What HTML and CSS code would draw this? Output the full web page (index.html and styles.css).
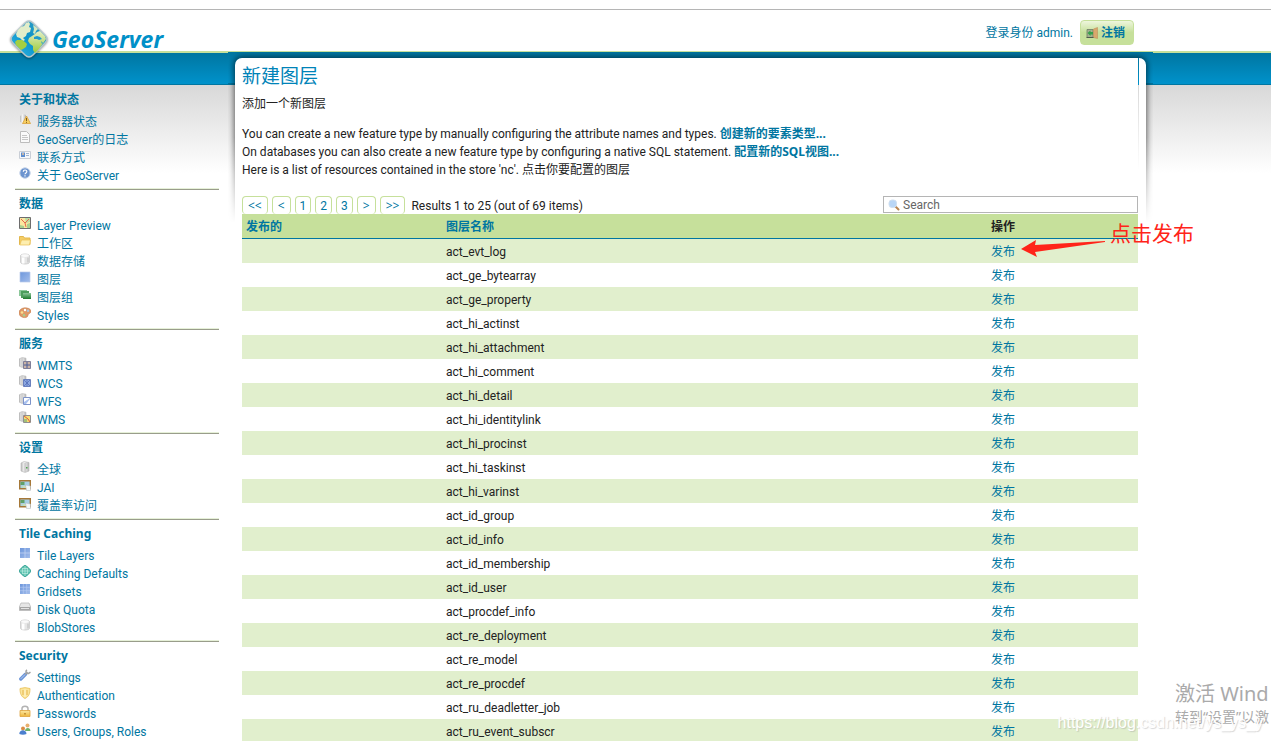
FILE: index.html
```html
<!DOCTYPE html>
<html lang="zh-CN">
<head>
<meta charset="utf-8">
<title>GeoServer: 新建图层</title>
<link rel="stylesheet" href="styles.css">
</head>
<body>
<svg class="sprite" aria-hidden="true">
  <defs>
    <linearGradient id="g-grey" x1="0" x2="1" y1="0" y2="0"><stop offset="0" stop-color="#b9b9b9"/><stop offset=".4" stop-color="#f6f6f6"/><stop offset="1" stop-color="#b5b5b5"/></linearGradient>
    <linearGradient id="g-blue" x1="0" x2="1" y1="0" y2="1"><stop offset="0" stop-color="#6d97dc"/><stop offset="1" stop-color="#a3bdeb"/></linearGradient>
    <linearGradient id="g-gold" x1="0" x2="0" y1="0" y2="1"><stop offset="0" stop-color="#fbe9a4"/><stop offset="1" stop-color="#eeb63c"/></linearGradient>
    <linearGradient id="g-green" x1="0" x2="0" y1="0" y2="1"><stop offset="0" stop-color="#8cc79a"/><stop offset="1" stop-color="#1d7a2c"/></linearGradient>
    <linearGradient id="g-sea" x1="0" x2="1" y1="1" y2="0"><stop offset="0" stop-color="#35b8e6"/><stop offset=".5" stop-color="#0a93cb"/><stop offset="1" stop-color="#3d9fc0"/></linearGradient>
    <linearGradient id="g-land" x1="0" x2="0" y1="0" y2="1"><stop offset="0" stop-color="#e4efc6"/><stop offset="1" stop-color="#9ccb3b"/></linearGradient>
  </defs>
  <symbol id="i-status" viewBox="0 0 12 12"><path d="M1 3l3-2 3 1v7l-3 1-3-1z" fill="url(#g-grey)"/><path d="M7.500 3l4 7.500h-8z" fill="#f7cf62" stroke="#d99a2b" stroke-width=".7"/><path d="M7.500 5v3M7.500 8.800v1" stroke="#7d5a1b"/></symbol>
  <symbol id="i-doc" viewBox="0 0 12 12"><path d="M1.500.5h6l3 3v8h-9z" fill="#fafafa" stroke="#bdbdbd"/><path d="M3 4.500h5M3 6.500h6M3 8.500h6" stroke="#c6c6c6"/></symbol>
  <symbol id="i-card" viewBox="0 0 12 12"><path d="M.5 2.500h11v7H.5z" fill="#f5f7fb" stroke="#c9ced6"/><path d="M2 3.500h4V8H2z" fill="#5c8dcf"/><circle cx="4" cy="5" r="1" fill="#e9c39c"/><path d="M7 4.500h3M7 6.500h3" stroke="#a2b5d1"/></symbol>
  <symbol id="i-help" viewBox="0 0 12 12"><circle cx="6" cy="6" r="5.200" fill="#6c94cf" stroke="#c3d2e8"/><path d="M4.300 4.700c0-2.200 3.500-2.200 3.500-.2C7.800 6 6 5.800 6 7.300M6 8.300v1.200" fill="none" stroke="#fff" stroke-width="1.200"/></symbol>
  <symbol id="i-map" viewBox="0 0 12 12"><path d="M.5.5h11v11H.5z" fill="#fbe7a0" stroke="#6d6d6d"/><path d="M6 1h5v4L7 6z" fill="#b9dba3"/><path d="M2 2l4 4 1 4M6 6l4-4" fill="none" stroke="#e5674b"/><path d="M1 8l4 1v2H1zM8 7l3-1v5H8z" fill="#a8cf8f"/></symbol>
  <symbol id="i-folder" viewBox="0 0 12 12"><path d="M.5 9.500v-8h4l1 1.500h5.500v6.500z" fill="#f4cd66" stroke="#e2b74d"/><path d="M2.500 5h9l-1 5H.8z" fill="#fdeeb0" stroke="#e9bf55" stroke-width=".7"/></symbol>
  <symbol id="i-db" viewBox="0 0 12 12"><path d="M1.500 2.500c1-2 8-2 9 0v7c-1 2-8 2-9 0z" fill="#e6e6e6" stroke="#c9c9c9" stroke-width=".8"/><ellipse cx="6" cy="2.600" rx="3.800" ry="1.300" fill="#fafafa"/><path d="M3 4.500h2.500v6H3z" fill="#fff"/><path d="M8 4.500h2v5H8z" fill="#d0d0d0"/></symbol>
  <symbol id="i-layer" viewBox="0 0 12 12"><path d="M1 1h10v10H1z" fill="url(#g-blue)" stroke="#b8c9ea" stroke-width=".7"/></symbol>
  <symbol id="i-group" viewBox="0 0 12 12"><path d="M0 1h8v6H0z" fill="#8cc79a"/><path d="M2 2h8v7H2z" fill="#4d9e5c"/><path d="M4 4h8v6H4z" fill="url(#g-green)"/></symbol>
  <symbol id="i-palette" viewBox="0 0 12 12"><path d="M0 6C0-.5 11-.5 12 4c0 3-3 2-3 4 0 3-4 3-6 2S0 8 0 6z" fill="#e09a68" stroke="#c37a4c" stroke-width=".6"/><circle cx="3" cy="5.500" r="1.300" fill="#f7e290"/><circle cx="6" cy="3" r="1.200" fill="#fff"/><circle cx="9" cy="3.800" r="1.200" fill="#a9c6e3"/><circle cx="5" cy="8.300" r="1.200" fill="#a6cf8f"/></symbol>
  <symbol id="i-server" viewBox="0 0 12 12"><path d="M2 2l3-1.500 5 1V10l-4 1.500-4-1.500z" fill="url(#g-grey)" stroke="#b5b5b5" stroke-width=".6"/><path d="M6 2v9" stroke="#a5a5a5" stroke-width=".7"/><path d="M7 6h1.500v1.500H7z" fill="#4fa44f"/></symbol>
  <symbol id="i-srv" viewBox="0 0 12 12"><path d="M0 2l3-1.500 4 .7V9L3 10.500 0 9z" fill="url(#g-grey)" stroke="#b5b5b5" stroke-width=".6"/><path d="M3 1v9" stroke="#a5a5a5" stroke-width=".7"/></symbol>
  <symbol id="i-wmts" viewBox="0 0 12 12"><use href="#i-srv"/><path d="M4.500 4.500h7v7h-7z" fill="#c9b3a6" stroke="#7f7f98"/><path d="M8 5v6M5 8h6" stroke="#4a5e9a"/></symbol>
  <symbol id="i-wcs" viewBox="0 0 12 12"><use href="#i-srv"/><path d="M4.500 4.500h7v7h-7z" fill="#8ea9e0" stroke="#6a80bd"/><path d="M5 5l6 6M11 5l-6 6M8 5v6" stroke="#4f69b5" stroke-width=".7"/></symbol>
  <symbol id="i-wfs" viewBox="0 0 12 12"><use href="#i-srv"/><path d="M4.500 4.500h7v7h-7z" fill="#fff" stroke="#7d93c9"/><path d="M5 11V9l6-4v1L7 11z" fill="#a9c1ee"/></symbol>
  <symbol id="i-wms" viewBox="0 0 12 12"><use href="#i-srv"/><path d="M4.500 4.500h7v7h-7z" fill="#f5dc71" stroke="#8f8f8f"/><path d="M5 5l4 3 2 3" fill="none" stroke="#db5c44"/><path d="M5 8h3v3H5z" fill="#a2c077"/></symbol>
  <symbol id="i-picture" viewBox="0 0 12 12"><path d="M.7 1.700h10.600v8H.7z" fill="#a6cfe6" stroke="#a67838" stroke-width="1.400"/><path d="M1.500 3h4v3h-4z" fill="#5fa068"/><path d="M6.500 6l5 1v4.500h-4z" fill="#f4f7f8" stroke="#aeb7bd" stroke-width=".5"/><path d="M1.500 8l4-1 2 2z" fill="#d5e4a8"/></symbol>
  <symbol id="i-tiles" viewBox="0 0 12 12"><path d="M1 1h10v10H1z" fill="url(#g-blue)"/><path d="M6 1v10M1 6h10" stroke="#c3d3f3" stroke-width=".8"/></symbol>
  <symbol id="i-grid" viewBox="0 0 12 12"><path d="M1 1h10v10H1z" fill="url(#g-blue)"/><path d="M4.300 1v10M7.700 1v10M1 4.300h10M1 7.700h10" stroke="#b9ccf1" stroke-width=".6"/></symbol>
  <symbol id="i-globe" viewBox="0 0 12 12"><path d="M4.500 1q1.500-1 3 0L11 4.500q1 1.500 0 3L7.500 11q-1.500 1-3 0L1 7.500q-1-1.500 0-3z" fill="#5cc3b0" stroke="#2f9f92"/><path d="M6 1v10M1 6h10M3.500 3.500h5M3.500 8.500h5M3.500 3v6M8.500 3v6" stroke="#c9efe6" stroke-width=".6"/></symbol>
  <symbol id="i-disk" viewBox="0 0 12 12"><path d="M2 2h8l1.700 4v3.500H.3V6z" fill="#e6e6e6" stroke="#b3b3b3" stroke-width=".7"/><path d="M.5 6h11v3.200H.5z" fill="#a5a5a5"/><path d="M2 7.500h8" stroke="#e3e3e3"/></symbol>
  <symbol id="i-wrench" viewBox="0 0 12 12"><path d="M1.800 10L6.500 5.300" stroke="#6c95d8" stroke-width="3.400" stroke-linecap="round"/><path d="M2 9.600l4-4" stroke="#b5cdf2" stroke-linecap="round"/><path d="M6 5.500L8.500 3M8 .8C6 2 7 5 9.500 4.500l2-1.300" fill="none" stroke="#a3a3a3" stroke-width="1.500"/></symbol>
  <symbol id="i-shield" viewBox="0 0 12 12"><path d="M1 1.500L6 .6l5 .9c0 5-1 8-5 10-4-2-5-5-5-10z" fill="#fbe59a" stroke="#e9bf55" stroke-width=".8"/><path d="M4 3v5M8 3v5" stroke="#e5b54e"/><path d="M6 2.500V10" stroke="#fff6d2"/></symbol>
  <symbol id="i-lock" viewBox="0 0 12 12"><path d="M3 6V3.500c0-3 6-3 6 0V6" fill="none" stroke="#b3b3b3" stroke-width="1.500"/><path d="M1 5.500h10v6H1z" fill="url(#g-gold)" stroke="#dea23c" stroke-width=".8"/><path d="M6 8v1.500" stroke="#a56d17" stroke-width="1.200"/></symbol>
  <symbol id="i-users" viewBox="0 0 12 12"><circle cx="8.500" cy="2.500" r="2" fill="#e8b06f"/><path d="M6 8c0-4 5.500-4 5.500 0z" fill="#6fb36a"/><circle cx="4" cy="5.500" r="2" fill="#d98d45"/><path d="M.3 11c0-5 7.200-5 7.200 0-2 1-5 1-7.200 0z" fill="#4b80cf"/></symbol>
  <symbol id="i-exit" viewBox="0 0 12 12"><path d="M1 2.500h6v8H1z" fill="#a3b18f" stroke="#6f7b66" stroke-width=".8"/><path d="M7.500 2l4-1.500v11l-4-1z" fill="#d9a76c" stroke="#b98652" stroke-width=".5"/><path d="M.5 10.500h7" stroke="#4f5a4c"/><path d="M1.500 6L4.500 3.500v1.500H7v2.500H4.500v1.500z" fill="#35a04a"/></symbol>
</svg>

<header class="top">
  <a class="logo" href="#">
    <svg class="logo-mark" viewBox="0 0 38 38" aria-hidden="true">
      <path d="M15 3q4-4 8 0l12 12q4 4 0 8L23 35q-4 4-8 0L3 23q-4-4 0-8z" fill="url(#g-sea)" stroke="#b4c6cc" stroke-width="1.500"/>
      <path d="M11 7l3-1 2-3 3-1 1 2-1 3 2 1-1 4-3 1-1 3-3 2 2 2-2 1-3-3-3-1-1-3 2-4z" fill="#e1edc9"/>
      <path d="M9 20l3 0 3 2 2 2-1 3-3 2-2 1-5-5-1-3 2-2z" fill="#a4cf42"/>
      <path d="M23 5l3 2 2 2-2 2-1 3-2-1 1-4z" fill="#d5e8bf"/>
      <path d="M22 16l3-2 2-2 3-1 5 5 1 3-2 3-3 4-2 3-4 4-2-3 0-4-3-2-2-3 1-3z" fill="url(#g-land)"/>
      <path d="M24 17l3-1 3 1 2 2-3 1-2-1-3 0zM31 21l2 2-1 1z" fill="#1f9bcd"/>
    </svg>
    <span>GeoServer</span>
  </a>
  <div class="session">
    <span>登录身份 admin.</span>
    <button class="logout" type="button"><svg class="icon" aria-hidden="true"><use href="#i-exit"/></svg>注销</button>
  </div>
</header>

<div class="page">
  <nav class="sidebar">
    <section><h2>关于和状态</h2><ul>
      <li><svg class="icon"><use href="#i-status"/></svg><a href="#">服务器状态</a></li>
      <li><svg class="icon"><use href="#i-doc"/></svg><a href="#">GeoServer的日志</a></li>
      <li><svg class="icon"><use href="#i-card"/></svg><a href="#">联系方式</a></li>
      <li><svg class="icon"><use href="#i-help"/></svg><a href="#">关于 GeoServer</a></li>
    </ul></section>
    <section><h2>数据</h2><ul>
      <li><svg class="icon"><use href="#i-map"/></svg><a href="#">Layer Preview</a></li>
      <li><svg class="icon"><use href="#i-folder"/></svg><a href="#">工作区</a></li>
      <li><svg class="icon"><use href="#i-db"/></svg><a href="#">数据存储</a></li>
      <li><svg class="icon"><use href="#i-layer"/></svg><a href="#">图层</a></li>
      <li><svg class="icon"><use href="#i-group"/></svg><a href="#">图层组</a></li>
      <li><svg class="icon"><use href="#i-palette"/></svg><a href="#">Styles</a></li>
    </ul></section>
    <section><h2>服务</h2><ul>
      <li><svg class="icon"><use href="#i-wmts"/></svg><a href="#">WMTS</a></li>
      <li><svg class="icon"><use href="#i-wcs"/></svg><a href="#">WCS</a></li>
      <li><svg class="icon"><use href="#i-wfs"/></svg><a href="#">WFS</a></li>
      <li><svg class="icon"><use href="#i-wms"/></svg><a href="#">WMS</a></li>
    </ul></section>
    <section><h2>设置</h2><ul>
      <li><svg class="icon"><use href="#i-server"/></svg><a href="#">全球</a></li>
      <li><svg class="icon"><use href="#i-picture"/></svg><a href="#">JAI</a></li>
      <li><svg class="icon"><use href="#i-picture"/></svg><a href="#">覆盖率访问</a></li>
    </ul></section>
    <section><h2>Tile Caching</h2><ul>
      <li><svg class="icon"><use href="#i-tiles"/></svg><a href="#">Tile Layers</a></li>
      <li><svg class="icon"><use href="#i-globe"/></svg><a href="#">Caching Defaults</a></li>
      <li><svg class="icon"><use href="#i-grid"/></svg><a href="#">Gridsets</a></li>
      <li><svg class="icon"><use href="#i-disk"/></svg><a href="#">Disk Quota</a></li>
      <li><svg class="icon"><use href="#i-db"/></svg><a href="#">BlobStores</a></li>
    </ul></section>
    <section><h2>Security</h2><ul>
      <li><svg class="icon"><use href="#i-wrench"/></svg><a href="#">Settings</a></li>
      <li><svg class="icon"><use href="#i-shield"/></svg><a href="#">Authentication</a></li>
      <li><svg class="icon"><use href="#i-lock"/></svg><a href="#">Passwords</a></li>
      <li><svg class="icon"><use href="#i-users"/></svg><a href="#">Users, Groups, Roles</a></li>
    </ul></section>
  </nav>

  <main class="content">
    <div class="panel-edge"></div>
    <h1>新建图层</h1>
    <p class="subtitle">添加一个新图层</p>
    <div class="intro">
      <p>You can create a new feature type by manually configuring the attribute names and types. <a href="#">创建新的要素类型...</a></p>
      <p>On databases you can also create a new feature type by configuring a native SQL statement. <a href="#">配置新的SQL视图...</a></p>
      <p>Here is a list of resources contained in the store 'nc'. 点击你要配置的图层</p>
    </div>
    <div class="toolbar">
      <div class="pager">
        <a class="jump" href="#">&lt;&lt;</a><a class="jump" href="#">&lt;</a><a href="#">1</a><a href="#">2</a><a href="#">3</a><a class="jump" href="#">&gt;</a><a class="jump" href="#">&gt;&gt;</a>
        <span>Results 1 to 25 (out of 69 items)</span>
      </div>
      <label class="search">
        <svg class="icon" viewBox="0 0 12 12" aria-hidden="true"><path d="M7.500 7.500l3 3" stroke="#b98450" stroke-width="2" stroke-linecap="round"/><rect x="1" y="1" width="7.500" height="7.500" rx="3" fill="#b9d6f6" stroke="#cfdff0"/></svg>
        <input type="text" placeholder="Search" aria-label="Search">
      </label>
    </div>
    <table class="layers">
      <colgroup><col class="col-published"><col><col class="col-action"></colgroup>
      <thead><tr><th><a href="#">发布的</a></th><th><a href="#">图层名称</a></th><th>操作</th></tr></thead>
      <tbody>
        <tr><td></td><td>act_evt_log</td><td><a href="#">发布</a></td></tr>
        <tr><td></td><td>act_ge_bytearray</td><td><a href="#">发布</a></td></tr>
        <tr><td></td><td>act_ge_property</td><td><a href="#">发布</a></td></tr>
        <tr><td></td><td>act_hi_actinst</td><td><a href="#">发布</a></td></tr>
        <tr><td></td><td>act_hi_attachment</td><td><a href="#">发布</a></td></tr>
        <tr><td></td><td>act_hi_comment</td><td><a href="#">发布</a></td></tr>
        <tr><td></td><td>act_hi_detail</td><td><a href="#">发布</a></td></tr>
        <tr><td></td><td>act_hi_identitylink</td><td><a href="#">发布</a></td></tr>
        <tr><td></td><td>act_hi_procinst</td><td><a href="#">发布</a></td></tr>
        <tr><td></td><td>act_hi_taskinst</td><td><a href="#">发布</a></td></tr>
        <tr><td></td><td>act_hi_varinst</td><td><a href="#">发布</a></td></tr>
        <tr><td></td><td>act_id_group</td><td><a href="#">发布</a></td></tr>
        <tr><td></td><td>act_id_info</td><td><a href="#">发布</a></td></tr>
        <tr><td></td><td>act_id_membership</td><td><a href="#">发布</a></td></tr>
        <tr><td></td><td>act_id_user</td><td><a href="#">发布</a></td></tr>
        <tr><td></td><td>act_procdef_info</td><td><a href="#">发布</a></td></tr>
        <tr><td></td><td>act_re_deployment</td><td><a href="#">发布</a></td></tr>
        <tr><td></td><td>act_re_model</td><td><a href="#">发布</a></td></tr>
        <tr><td></td><td>act_re_procdef</td><td><a href="#">发布</a></td></tr>
        <tr><td></td><td>act_ru_deadletter_job</td><td><a href="#">发布</a></td></tr>
        <tr><td></td><td>act_ru_event_subscr</td><td><a href="#">发布</a></td></tr>
      </tbody>
    </table>
    <div class="callout">
      <svg class="arrow" viewBox="0 0 85 18" aria-hidden="true"><path d="M0 9L15 0l-1 5L84 1v1L14 12l2 5z" fill="#ff2419"/></svg>
      <span>点击发布</span>
    </div>
  </main>
</div>

<div class="activation"><strong>激活 Wind</strong><span>转到“设置”以激</span></div>
<div class="watermark">https://blog.csdn.net/ys_ys_y</div>
</body>
</html>
```

FILE: styles.css
```css
* { box-sizing: border-box; }

body {
  margin: 0;
  height: 100vh;
  overflow: hidden;
  position: relative;
  background: #fff;
  color: #222;
  font: 12px/18px Roboto, "Noto Sans CJK SC", sans-serif;
}

h1, h2, p, ul { margin: 0; padding: 0; }
ul { list-style: none; }
a { color: #0076a1; text-decoration: none; }
.sprite { position: absolute; width: 0; height: 0; }
.icon { width: 12px; height: 12px; flex: none; }

.top {
  margin-top: 9px;
  height: 44px;
  padding: 10px 137px 0 10px;
  border-top: 1px solid #b5b5b5;
  border-bottom: 2px solid #c6e09b;
  display: flex;
  justify-content: space-between;
  align-items: flex-start;
}
.logo {
  display: flex;
  gap: 4px;
  position: relative;
  z-index: 2;
  color: #0090c8;
  font: italic bold 23px/38px "Open Sans", sans-serif;
}
.logo-mark { width: 38px; height: 38px; flex: none; filter: drop-shadow(0 1px 1px #0006); }
.session { display: flex; align-items: center; gap: 7px; color: #0076a1; }
.logout {
  display: flex;
  align-items: center;
  gap: 3px;
  height: 25px;
  padding: 0 8px 0 5px;
  border: 1px solid #c6e09b;
  border-radius: 4px;
  background: linear-gradient(#eef6dd, #c6e09b 50%);
  color: #0076a1;
  font: bold 12px/18px "Noto Sans", "Noto Sans CJK SC", sans-serif;
}

.page {
  display: grid;
  grid-template-columns: 235px minmax(0, 1fr) 125px;
  background:
    linear-gradient(#0076a1, #0092cb 31px, #0076a1 31px, #0076a1 32px, transparent 32px),
    linear-gradient(transparent 32px, #d8d8d8 32px, #fff 120px);
}

.sidebar { padding: 38px 16px 0 15px; }
.sidebar section { padding-bottom: 4px; border-bottom: 1px solid #999d8b; box-shadow: inset 0 -1px #e6f0d8; }
.sidebar section + section { padding-top: 5px; }
.sidebar h2 { padding: 0 4px 4px; font: bold 12px/18px "Noto Sans", "Noto Sans CJK SC", sans-serif; color: #0076a1; }
.sidebar li { display: flex; gap: 6px; padding-left: 4px; height: 18px; }

.content { position: relative; z-index: 0; padding: 0 8px 0 7px; margin-top: 5px; }
.content::before {
  content: "";
  position: absolute;
  z-index: -1;
  inset: 0;
  border-radius: 7px 7px 0 0;
  background: #fff;
}
.content::after {
  content: "";
  position: absolute;
  top: 0;
  right: 7px;
  width: 1px;
  height: 112px;
  background: linear-gradient(#0076a1, #0092cb 27px, #d8d8d8 27px, #fff);
}
.panel-edge {
  position: absolute;
  z-index: -2;
  top: -6px;
  left: -7px;
  right: -7px;
  height: 171px;
  overflow: hidden;
  background: linear-gradient(#0076a1, #0092cb 31px, #0076a1 31px, #0076a1 32px, transparent 32px);
  -webkit-mask-image: linear-gradient(#000 50%, transparent);
  mask-image: linear-gradient(#000 50%, transparent);
}
.panel-edge::before {
  content: "";
  position: absolute;
  inset: 6px 7px -20px;
  border-radius: 7px 7px 0 0;
  box-shadow: 0 0 6px 1px #0009;
}
.content h1 { padding-top: 6px; font-size: 19px; line-height: 25px; font-weight: normal; color: #0083b8; }
.subtitle { margin-top: 6px; }
.intro { margin-top: 12px; }
.intro a { font-family: "Noto Sans", "Noto Sans CJK SC", sans-serif; font-weight: bold; }

.toolbar { display: flex; justify-content: space-between; align-items: flex-end; margin-top: 17px; height: 18px; }
.pager { display: flex; gap: 4px; }
.pager a { padding: 0 4px; border: 1px solid #c6e09b; border-bottom: 0; border-radius: 4px; height: 18px; line-height: 18px; }
.pager .jump { padding: 0 5px; font-family: "Noto Sans", sans-serif; }
.pager span { margin-left: 2px; line-height: 20px; height: 18px; }
.search { display: flex; align-items: center; gap: 3px; width: 255px; height: 17px; margin-bottom: 1px; padding: 0 4px; border: 1px solid #b5b5b5; background: #fff; }
.search input { flex: 1; min-width: 0; height: 15px; padding: 1px 0 0; border: 0; outline: 0; background: none; font: 12px/14px Roboto, sans-serif; }
.search input::placeholder { color: #666; }

.layers { width: 100%; table-layout: fixed; border-spacing: 0; }
.col-published { width: 200px; }
.col-action { width: 151px; }
.layers th, .layers td { height: 24px; padding: 1px 4px 0; text-align: left; line-height: 18px; }
.layers th { height: 25px; background: #c6e09b; border-bottom: 1px solid #0076a1; }
.layers tbody tr:nth-child(odd) { background: #e1efcd; }

.callout {
  position: absolute;
  z-index: 3;
  top: 164px;
  right: -48px;
  display: flex;
  align-items: flex-start;
  gap: 4px;
  color: #ff2419;
  font-size: 21px;
  line-height: 24px;
}
.arrow { width: 85px; height: 18px; margin-top: 18px; }

.activation, .watermark { position: absolute; z-index: 4; white-space: nowrap; }
.activation { right: 0; bottom: 15px; width: 96px; display: flex; flex-direction: column; color: #aaa; font-size: 14px; font-family: "Noto Sans", "Noto Sans CJK SC", sans-serif; }
.activation strong { font-size: 20px; line-height: 28px; font-weight: normal; }
.watermark { right: 8px; bottom: 9px; color: #fff; font: 16px/18px "Liberation Sans", sans-serif; text-shadow: 1px 1px 1px #9996; }
```
